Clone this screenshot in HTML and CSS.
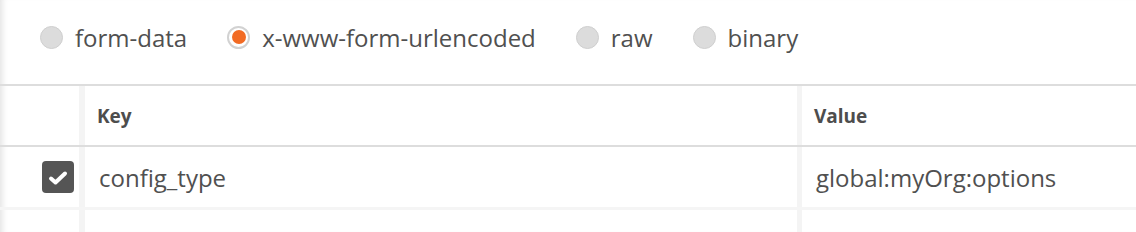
FILE: index.html
```html
<!DOCTYPE html>
<html lang="en">
<head>
  <meta charset="UTF-8">
  <title>Body – x-www-form-urlencoded</title>
  <link rel="stylesheet" href="styles.css">
</head>
<body>
  <div class="panel">
    <div class="body-types">
      <label class="opt"><span class="radio"></span>form-data</label>
      <label class="opt"><span class="radio on"></span>x-www-form-urlencoded</label>
      <label class="opt"><span class="radio"></span>raw</label>
      <label class="opt"><span class="radio"></span>binary</label>
    </div>

    <div class="kv">
      <div class="row head">
        <div class="cell check"></div>
        <div class="cell key">Key</div>
        <div class="cell val">Value</div>
      </div>
      <div class="row">
        <div class="cell check">
          <span class="box">
            <svg width="32" height="32" viewBox="0 0 32 32"><polyline points="9,17.5 13.5,21.5 23,12.5" fill="none" stroke="#fff" stroke-width="4" stroke-linecap="round" stroke-linejoin="round"/></svg>
          </span>
        </div>
        <div class="cell key">config_type</div>
        <div class="cell val">global:myOrg:options</div>
      </div>
      <div class="row empty">
        <div class="cell check"></div>
        <div class="cell key">Key</div>
        <div class="cell val">Value</div>
      </div>
    </div>
  </div>
</body>
</html>
```

FILE: styles.css
```css
body {
  margin: 0;
  background: #fff;
  font-family: "Open Sans", "Liberation Sans", sans-serif;
  color: #505050;
  overflow: hidden;
}

.panel {
  height: 232px;
  overflow: hidden;
  box-shadow: inset 7px 0 6px -5px rgba(0, 0, 0, 0.12);
}

.body-types {
  display: flex;
  align-items: center;
  gap: 40px;
  height: 84px;
  padding: 0 0 10px 40px;
  box-sizing: border-box;
  font-size: 24px;
}

.opt {
  display: flex;
  align-items: center;
  gap: 12px;
}

.radio {
  width: 21px;
  height: 21px;
  border-radius: 50%;
  background: #dcdcdc;
  border: 1px solid #cfcfcf;
  position: relative;
}
.radio.on {
  background: #fff;
  border: 2px solid #d2d2d2;
  width: 19px;
  height: 19px;
}
.radio.on::after {
  content: "";
  position: absolute;
  left: 2.5px;
  top: 2.5px;
  width: 14px;
  height: 14px;
  border-radius: 50%;
  background: #f26b24;
}

.kv {
  border-top: 2px solid #dddddd;
}

.row {
  display: grid;
  grid-template-columns: 79px 718px 1fr;
  height: 60px;
  border-bottom: 3px solid #f5f5f5;
  font-size: 24px;
}
.row.head {
  height: 59px;
  border-bottom: 2px solid #dddddd;
  font-size: 19px;
  font-weight: bold;
  color: #4d4d4d;
}
.row.empty {
  color: #d4d4d4;
}

.cell {
  display: flex;
  align-items: center;
  padding-left: 14px;
  white-space: nowrap;
}
.head .cell { padding-left: 12px; }
.cell.key { border-left: 6px solid #f4f4f4; }
.cell.val { border-left: 5px solid #f4f4f4; }

.cell.check,
.head .cell.check {
  justify-content: flex-end;
  padding: 0 5px 0 0;
}

.box {
  width: 32px;
  height: 32px;
  border-radius: 4px;
  background: #555555;
  display: block;
}
.box svg { display: block; }
```
